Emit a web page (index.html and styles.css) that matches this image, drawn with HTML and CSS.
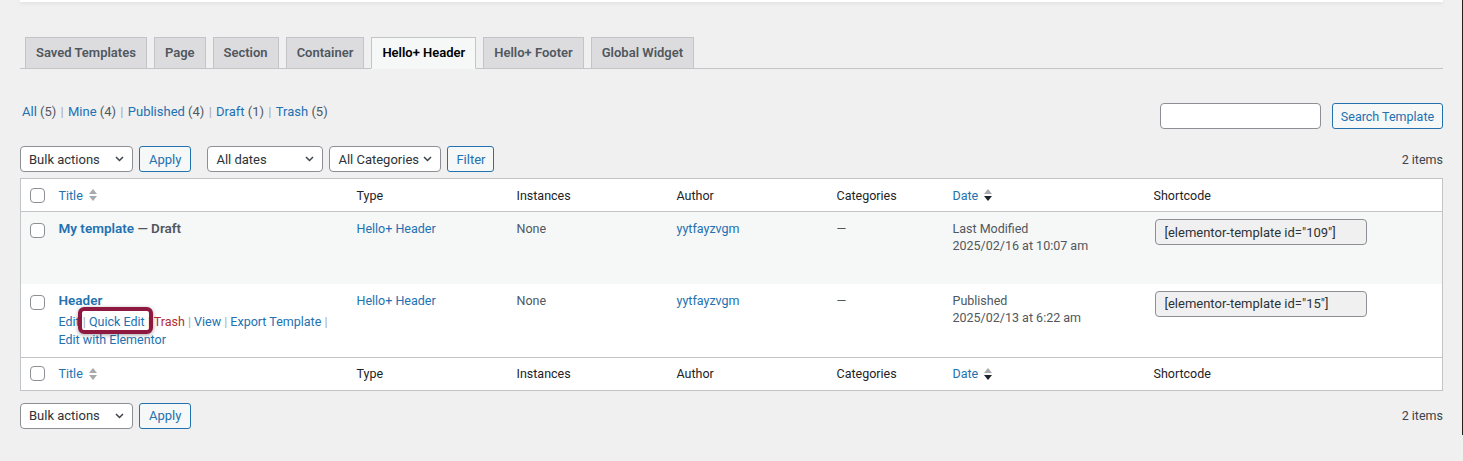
FILE: index.html
```html
<!DOCTYPE html>
<html lang="en">
<head>
  <meta charset="UTF-8">
  <title>Templates</title>
  <link rel="stylesheet" href="styles.css">
</head>
<body>
  <div class="topbar"></div>

  <div class="wrap">
    <nav class="tabs">
      <a class="tab" href="#">Saved Templates</a>
      <a class="tab" href="#">Page</a>
      <a class="tab" href="#">Section</a>
      <a class="tab" href="#">Container</a>
      <a class="tab tab-active" href="#">Hello+ Header</a>
      <a class="tab" href="#">Hello+ Footer</a>
      <a class="tab" href="#">Global Widget</a>
    </nav>

    <div class="views-row">
      <ul class="subsubsub">
        <li><a href="#">All</a> <span class="count">(5)</span> <span class="sep">|</span> </li>
        <li><a href="#">Mine</a> <span class="count">(4)</span> <span class="sep">|</span> </li>
        <li><a href="#">Published</a> <span class="count">(4)</span> <span class="sep">|</span> </li>
        <li><a href="#">Draft</a> <span class="count">(1)</span> <span class="sep">|</span> </li>
        <li><a href="#">Trash</a> <span class="count">(5)</span></li>
      </ul>
      <div class="search-box">
        <input class="search-input" type="search">
        <button class="button button-search">Search Template</button>
      </div>
    </div>

    <div class="tablenav">
      <div class="actions">
        <div class="select select-bulk">Bulk actions
          <svg width="9" height="6" viewBox="0 0 9 6"><path d="M1 1l3.5 3.5L8 1" fill="none" stroke="#3c434a" stroke-width="1.5"/></svg>
        </div>
        <button class="button">Apply</button>
      </div>
      <div class="actions">
        <div class="select select-dates">All dates
          <svg width="9" height="6" viewBox="0 0 9 6"><path d="M1 1l3.5 3.5L8 1" fill="none" stroke="#3c434a" stroke-width="1.5"/></svg>
        </div>
        <div class="select select-cats">All Categories
          <svg width="9" height="6" viewBox="0 0 9 6"><path d="M1 1l3.5 3.5L8 1" fill="none" stroke="#3c434a" stroke-width="1.5"/></svg>
        </div>
        <button class="button button-filter">Filter</button>
      </div>
      <div class="displaying-num">2 items</div>
    </div>

    <table class="list-table">
      <colgroup>
        <col class="col-check">
        <col class="col-title">
        <col class="col-type">
        <col class="col-instances">
        <col class="col-author">
        <col class="col-cats">
        <col class="col-date">
        <col>
      </colgroup>
      <thead>
        <tr>
          <th class="check"><span class="checkbox"></span></th>
          <th><a class="sortable" href="#">Title
            <svg width="8" height="12" viewBox="0 0 8 12"><path d="M4 0l4 5H0z" fill="#a7aaad"/><path d="M0 7h8l-4 5z" fill="#a7aaad"/></svg></a></th>
          <th>Type</th>
          <th>Instances</th>
          <th>Author</th>
          <th>Categories</th>
          <th><a class="sortable" href="#">Date
            <svg width="8" height="12" viewBox="0 0 8 12"><path d="M4 0l4 5H0z" fill="#a7aaad"/><path d="M0 7h8l-4 5z" fill="#1d2327"/></svg></a></th>
          <th>Shortcode</th>
        </tr>
      </thead>
      <tbody>
        <tr class="alt">
          <td class="check"><span class="checkbox"></span></td>
          <td><strong class="row-title"><a href="#">My template</a> — Draft</strong></td>
          <td><a href="#">Hello+ Header</a></td>
          <td>None</td>
          <td><a href="#">yytfayzvgm</a></td>
          <td>—</td>
          <td>Last Modified<br>2025/02/16 at 10:07 am</td>
          <td><input class="shortcode" type="text" value='[elementor-template id="109"]' readonly></td>
        </tr>
        <tr>
          <td class="check"><span class="checkbox"></span></td>
          <td>
            <strong class="row-title"><a href="#">Header</a></strong>
            <div class="row-actions">
              <div class="actions-line"><a href="#">Edit</a> | <a class="marked" href="#">Quick Edit</a> | <a class="trash" href="#">Trash</a> | <a href="#">View</a> | <a href="#">Export Template</a> |</div>
              <div class="actions-line"><a href="#">Edit with Elementor</a></div>
            </div>
          </td>
          <td><a href="#">Hello+ Header</a></td>
          <td>None</td>
          <td><a href="#">yytfayzvgm</a></td>
          <td>—</td>
          <td>Published<br>2025/02/13 at 6:22 am</td>
          <td><input class="shortcode" type="text" value='[elementor-template id="15"]' readonly></td>
        </tr>
      </tbody>
      <tfoot>
        <tr>
          <th class="check"><span class="checkbox"></span></th>
          <th><a class="sortable" href="#">Title
            <svg width="8" height="12" viewBox="0 0 8 12"><path d="M4 0l4 5H0z" fill="#a7aaad"/><path d="M0 7h8l-4 5z" fill="#a7aaad"/></svg></a></th>
          <th>Type</th>
          <th>Instances</th>
          <th>Author</th>
          <th>Categories</th>
          <th><a class="sortable" href="#">Date
            <svg width="8" height="12" viewBox="0 0 8 12"><path d="M4 0l4 5H0z" fill="#a7aaad"/><path d="M0 7h8l-4 5z" fill="#1d2327"/></svg></a></th>
          <th>Shortcode</th>
        </tr>
      </tfoot>
    </table>

    <div class="tablenav tablenav-bottom">
      <div class="actions">
        <div class="select select-bulk">Bulk actions
          <svg width="9" height="6" viewBox="0 0 9 6"><path d="M1 1l3.5 3.5L8 1" fill="none" stroke="#3c434a" stroke-width="1.5"/></svg>
        </div>
        <button class="button">Apply</button>
      </div>
      <div class="displaying-num">2 items</div>
    </div>
  </div>
</body>
</html>
```

FILE: styles.css
```css
html {
  border-right: 1px solid #2a1e17;
}

body {
  margin: 0;
  background: #f0f0f1;
  color: #3c434a;
  font-family: Roboto, "Noto Sans", sans-serif;
  font-size: 13px;
  -webkit-font-smoothing: antialiased;
}

a {
  color: #2271b1;
  text-decoration: none;
}

.topbar {
  height: 2px;
  margin: 0 19px 0 20px;
  background: #fff;
  box-shadow: 0 1px 4px rgba(0, 0, 0, 0.12);
}

.wrap {
  padding: 0 19px 0 20px;
}

/* Tabs */
.tabs {
  display: flex;
  margin-top: 35px;
  border-bottom: 1px solid #c3c4c7;
}

.tab {
  margin-left: 7px;
  margin-bottom: -1px;
  padding: 0 10px;
  line-height: 30px;
  border: 1px solid #c3c4c7;
  background: #dcdcde;
  color: #50575e;
  font-weight: 600;
}

.tab:first-child {
  margin-left: 5px;
}

.tab-active {
  background: #f6f7f7;
  border-bottom-color: #f6f7f7;
  color: #000;
}

/* Views + search */
.views-row {
  display: flex;
  justify-content: space-between;
  align-items: flex-start;
  margin-top: 34px;
}

.subsubsub {
  display: flex;
  list-style: none;
  margin: 0;
  padding: 0 0 0 2px;
  line-height: 18px;
}

.subsubsub li {
  white-space: pre;
}

.subsubsub .count {
  color: #50575e;
}

.subsubsub .sep {
  color: #a7aaad;
  margin: 0 1px;
}

.search-box {
  display: flex;
  gap: 11px;
}

.search-input {
  box-sizing: border-box;
  width: 161px;
  height: 26px;
  margin: 0;
  border: 1px solid #8c8f94;
  border-radius: 4px;
  background: #fff;
}

.button {
  box-sizing: border-box;
  height: 26px;
  margin: 0;
  padding: 0 9px;
  border: 1px solid #2271b1;
  border-radius: 3px;
  background: #f6f7f7;
  color: #2271b1;
  font-family: inherit;
  font-size: 13px;
}

.button-search {
  width: 111px;
  padding: 0;
  font-size: 12.5px;
}

.button-filter {
  width: 47px;
  padding: 0;
}

/* Table nav */
.tablenav {
  display: flex;
  align-items: center;
  gap: 16px;
  margin: 17px 0 6px;
}

.tablenav .actions {
  display: flex;
  gap: 6px;
}

.select {
  box-sizing: border-box;
  display: flex;
  justify-content: space-between;
  align-items: center;
  height: 26px;
  padding: 0 8px;
  border: 1px solid #8c8f94;
  border-radius: 4px;
  background: #fff;
  color: #2c3338;
  white-space: nowrap;
}

.select-bulk {
  width: 113px;
}

.select-dates {
  width: 116px;
}

.select-cats {
  width: 112px;
}

.displaying-num {
  margin-left: auto;
  color: #3c434a;
  font-size: 12.5px;
}

.tablenav-bottom {
  margin-top: 12px;
}

/* List table */
.list-table {
  width: 100%;
  table-layout: fixed;
  border-collapse: collapse;
  border: 1px solid #c3c4c7;
  background: #fff;
  font-size: 12.5px;
}

.col-check { width: 28px; }
.col-title { width: 298px; }
.col-type { width: 160px; }
.col-instances { width: 160px; }
.col-author { width: 160px; }
.col-cats { width: 116px; }
.col-date { width: 201px; }

.list-table th {
  height: 32px;
  padding: 0 10px;
  text-align: left;
  font-weight: 400;
  color: #1d2327;
}

.list-table thead th {
  border-bottom: 1px solid #c3c4c7;
}

.list-table tfoot th {
  border-top: 1px solid #c3c4c7;
}

.list-table th.check,
.list-table td.check {
  padding: 0 0 0 9px;
}

.list-table td.check {
  padding-top: 11px;
}

.checkbox {
  display: block;
  box-sizing: border-box;
  width: 15px;
  height: 15px;
  border: 1px solid #8c8f94;
  border-radius: 4px;
  background: #fff;
}

.sortable {
  display: inline-flex;
  align-items: center;
  gap: 6px;
}

.list-table tbody tr {
  height: 72px;
}

.list-table tbody tr.alt {
  background: #f6f7f7;
}

.list-table td {
  padding: 8px 10px;
  vertical-align: top;
  line-height: 17px;
  color: #50575e;
}

.row-title {
  color: #50575e;
  font-size: 13.5px;
  font-weight: 600;
}

.row-actions {
  margin-top: 4px;
  line-height: 18px;
  font-size: 12.5px;
  color: #a7aaad;
}

.actions-line {
  white-space: nowrap;
}

.row-actions .trash {
  color: #b32d2e;
}

.marked {
  position: relative;
}

.marked::after {
  content: '';
  position: absolute;
  top: -7px;
  left: -11px;
  right: -8px;
  bottom: -5px;
  border: 4px solid #8d1840;
  border-radius: 6px;
  box-shadow: 0 1px 4px rgba(0, 0, 0, 0.35);
}

.shortcode {
  box-sizing: border-box;
  width: 212px;
  height: 26px;
  margin: -1px 0 0 1px;
  padding: 0 9px;
  border: 1px solid #8c8f94;
  border-radius: 4px;
  background: #f0f0f1;
  color: #2c3338;
  font-family: inherit;
  font-size: 13px;
}
```
